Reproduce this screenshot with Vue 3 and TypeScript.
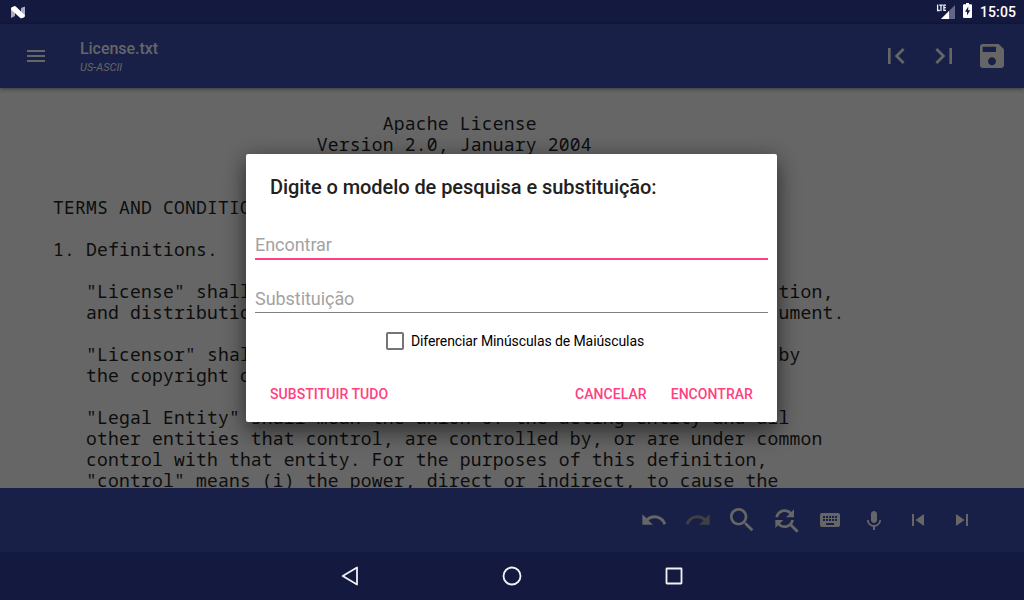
<script setup lang="ts">
import { ref } from 'vue'

const find = ref('')
const replacement = ref('')
const matchCase = ref(false)

const licenseText = [
  '                                 Apache License',
  '                           Version 2.0, January 2004',
  '                        http://www.apache.org/licenses/',
  '',
  '   TERMS AND CONDITIONS FOR USE, REPRODUCTION, AND DISTRIBUTION',
  '',
  '   1. Definitions.',
  '',
  '      "License" shall mean the terms and conditions for use, reproduction,',
  '      and distribution as defined by Sections 1 through 9 of this document.',
  '',
  '      "Licensor" shall mean the copyright owner or entity authorized by',
  '      the copyright owner that is granting the License.',
  '',
  '      "Legal Entity" shall mean the union of the acting entity and all',
  '      other entities that control, are controlled by, or are under common',
  '      control with that entity. For the purposes of this definition,',
  '      "control" means (i) the power, direct or indirect, to cause the',
].join('\n')

interface Tool { name: string; path: string; size: number; off?: boolean }

const tools: Tool[] = [
  { name: 'Undo', size: 28, path: 'M12.5 8c-2.65 0-5.05.99-6.9 2.6L2 7v9h9l-3.62-3.62c1.39-1.16 3.16-1.88 5.12-1.88 3.54 0 6.55 2.31 7.6 5.5l2.37-.78C21.08 11.03 17.15 8 12.5 8z' },
  { name: 'Redo', size: 28, off: true, path: 'M18.4 10.6C16.55 8.99 14.15 8 11.5 8c-4.65 0-8.58 3.03-9.96 7.22L3.9 16c1.05-3.19 4.05-5.5 7.6-5.5 1.95 0 3.73.72 5.12 1.88L13 16h9V7l-3.6 3.6z' },
  { name: 'Find', size: 32, path: 'M15.5 14h-.79l-.28-.27C15.41 12.59 16 11.11 16 9.5 16 5.91 13.09 3 9.5 3S3 5.91 3 9.5 5.91 16 9.5 16c1.61 0 3.09-.59 4.23-1.57l.27.28v.79l5 4.99L20.49 19l-4.99-5zm-6 0C7.01 14 5 11.99 5 9.5S7.01 5 9.5 5 14 7.01 14 9.5 11.99 14 9.5 14z' },
  { name: 'Replace', size: 32, path: 'M11 6c1.38 0 2.63.56 3.54 1.46L12 10h6V4l-2.05 2.05C14.68 4.78 12.93 4 11 4c-3.53 0-6.43 2.61-6.92 6H6.1c.46-2.28 2.48-4 4.9-4zm5.64 9.14c.66-.9 1.12-1.97 1.28-3.14H15.9c-.46 2.28-2.48 4-4.9 4-1.38 0-2.63-.56-3.54-1.46L10 12H4v6l2.05-2.05C7.32 17.22 9.07 18 11 18c1.55 0 2.98-.51 4.14-1.36L20 21.49 21.49 20l-4.85-4.86z' },
  { name: 'Keyboard', size: 24, path: 'M20 5H4c-1.1 0-1.99.9-1.99 2L2 17c0 1.1.9 2 2 2h16c1.1 0 2-.9 2-2V7c0-1.1-.9-2-2-2zm-9 3h2v2h-2V8zm0 3h2v2h-2v-2zM8 8h2v2H8V8zm0 3h2v2H8v-2zm-1 2H5v-2h2v2zm0-3H5V8h2v2zm9 7H8v-2h8v2zm0-4h-2v-2h2v2zm0-3h-2V8h2v2zm3 3h-2v-2h2v2zm0-3h-2V8h2v2z' },
  { name: 'Voice', size: 24, path: 'M12 15c1.66 0 2.99-1.34 2.99-3L15 6c0-1.66-1.34-3-3-3S9 4.34 9 6v6c0 1.66 1.34 3 3 3zm5.3-3c0 3-2.54 5.1-5.3 5.1S6.7 15 6.7 12H5c0 3.42 2.72 6.23 6 6.72V22h2v-3.28c3.28-.48 6-3.3 6-6.72h-1.7z' },
  { name: 'Previous', size: 24, path: 'M6 6h2v12H6zm3.5 6l8.5 6V6z' },
  { name: 'Next', size: 24, path: 'M6 18l8.5-6L6 6v12zM16 6v12h2V6h-2z' },
]
</script>

<template>
  <div class="screen">
    <header class="status">
      <svg class="nougat" width="14" height="13" viewBox="0 0 14 13">
        <path d="M0 2l4-1.5V10l-4 2zM10 2l4-1.5V10l-4 2z" fill="#a9abbd" />
        <path d="M.2 2.600Q.2 1.300 1.300.9L3.200.2q.9-.3 1.600.4L13.800 9v1.300q-.1 1-1 1.300l-2 .7q-.8.2-1.500-.4L.2 3.700z" fill="#fff" />
      </svg>
      <div class="indicators">
        <svg width="19" height="16" viewBox="0 0 19 16">
          <path d="M19 1v14H5z" fill="#62668a" />
          <path d="M13 7v8H5z" fill="#fff" />
          <path d="M0 0h11v8H0z" fill="#141940" />
          <path d="M1.600.5v6h2.200M3.200 1.100h3.600M5 1.100v5.900M10 1.100H7.900v5.300H10M7.900 3.700h2" fill="none" stroke="#f0f0f5" stroke-width="1.300" />
        </svg>
        <svg class="battery" width="9" height="15" viewBox="0 0 9 15">
          <path d="M3 0h3v1.300h2q1 0 1 1V14q0 1-1 1H1q-1 0-1-1V2.300q0-1 1-1h2z" fill="#fff" />
          <path d="M5.300 3.500L2 8.800h2v3.700l3.200-5.300H5.200z" fill="#141940" />
        </svg>
        <span class="clock">15:05</span>
      </div>
    </header>

    <div class="appbar">
      <svg class="menu" width="24" height="24" viewBox="0 0 24 24"><path d="M3 18h18v-2H3v2zm0-5h18v-2H3v2zm0-7v2h18V6H3z" /></svg>
      <div class="titles">
        <div class="file">License.txt</div>
        <div class="encoding">US-ASCII</div>
      </div>
      <div class="actions">
        <svg width="32" height="32" viewBox="0 0 24 24"><path d="M18.410 16.590L13.820 12l4.590-4.590L17 6l-6 6 6 6zM6 6h2v12H6z" /></svg>
        <svg width="32" height="32" viewBox="0 0 24 24"><path d="M5.590 7.410L10.180 12l-4.590 4.590L7 18l6-6-6-6zM16 6h2v12h-2z" /></svg>
        <svg width="32" height="32" viewBox="0 0 24 24"><path d="M17 3H5c-1.110 0-2 .9-2 2v14c0 1.100.89 2 2 2h14c1.100 0 2-.9 2-2V7l-4-4zm-5 16c-1.660 0-3-1.340-3-3s1.340-3 3-3 3 1.340 3 3-1.340 3-3 3zm3-10H5V5h10v4z" /></svg>
      </div>
    </div>

    <main class="editor"><pre>{{ licenseText }}</pre></main>

    <div class="toolbar">
      <span v-for="tool in tools" :key="tool.name" class="tool" :class="{ off: tool.off }">
        <svg :width="tool.size" :height="tool.size" viewBox="0 0 24 24"><path :d="tool.path" /></svg>
      </span>
    </div>

    <nav class="nav">
      <svg width="24" height="24" viewBox="0 0 24 24"><path d="M19 3.500v17L4.700 12z" /></svg>
      <svg width="24" height="24" viewBox="0 0 24 24"><circle cx="12" cy="12" r="8.500" /></svg>
      <svg width="24" height="24" viewBox="0 0 24 24"><rect x="4.500" y="4.500" width="15" height="15" rx=".5" /></svg>
    </nav>

    <section class="dialog" role="dialog">
      <h1>Digite o modelo de pesquisa e substituição:</h1>
      <input v-model="find" class="field active" placeholder="Encontrar" />
      <input v-model="replacement" class="field second" placeholder="Substituição" />
      <label class="check">
        <input v-model="matchCase" type="checkbox" />
        <span>Diferenciar Minúsculas de Maiúsculas</span>
      </label>
      <div class="buttons">
        <button class="all">Substituir tudo</button>
        <button>Cancelar</button>
        <button>Encontrar</button>
      </div>
    </section>
  </div>
</template>

<style>
body { margin: 0; overflow: hidden; }
</style>

<style scoped>
* { box-sizing: border-box; }
svg { display: block; flex: none; }
.screen { position: relative; width: 1024px; height: 600px; display: flex; flex-direction: column; overflow: hidden; background: #666; font-family: Roboto, sans-serif; }
.status { height: 24px; flex: none; display: flex; justify-content: space-between; background: #141940; padding: 0 8px 0 11px; }
.nougat { margin-top: 6px; }
.indicators { display: flex; color: #fff; }
.indicators > svg:first-child { margin-top: 4px; }
.battery { margin: 3px 8px 0 8px; }
.clock { font-size: 14px; font-weight: 500; line-height: 25px; letter-spacing: .1px; width: 36px; }
.appbar { height: 64px; flex: none; display: flex; align-items: center; background: #192048; color: #666; padding: 0 16px 0 24px; position: relative; box-shadow: 0 1px 4px rgba(0, 0, 0, .45); }
.appbar svg { fill: #666; }
.titles { margin-left: 32px; flex: 1; padding-top: 2px; }
.file { font-size: 16px; font-weight: 500; line-height: 20px; letter-spacing: -.05px; }
.encoding { font-size: 11px; font-style: italic; line-height: 14px; margin-top: 2px; }
.actions { display: flex; gap: 16px; }
.editor { height: 400px; flex: none; overflow: hidden; padding: 25px 0 0 20px; }
pre { margin: 0; font-family: "Droid Sans Mono", "Noto Sans Mono", "DejaVu Sans Mono", monospace; font-size: 18px; line-height: 21px; letter-spacing: .194px; color: #0d0d0d; }
.toolbar { height: 64px; flex: none; display: flex; justify-content: flex-end; background: #192048; padding-right: 40px; }
.tool { width: 44px; display: flex; align-items: center; justify-content: center; }
.tool svg { fill: #666; }
.tool:nth-child(-n+4) svg { margin-right: 1px; }
.tool.off svg { fill: #404040; }
.nav { height: 48px; flex: none; display: flex; align-items: center; justify-content: center; gap: 138px; background: #141940; }
.nav svg { fill: none; stroke: #f2f2f5; stroke-width: 1.8; stroke-linejoin: round; }
.dialog { position: absolute; left: 246px; top: 154px; width: 531px; height: 268px; background: #fff; border-radius: 2px; box-shadow: 0 12px 22px rgba(0, 0, 0, .38), 0 2px 20px rgba(0, 0, 0, .28); display: flex; flex-direction: column; padding: 0 9px; }
h1 { margin: 20px 15px 0; font-size: 20px; font-weight: 500; line-height: 27px; letter-spacing: -.065px; color: #212121; white-space: nowrap; }
.field { width: 100%; height: 32px; margin: 27px 0 0; padding: 3px 0 0; border: 0; border-bottom: 1px solid #808080; border-radius: 0; outline: 0; background: none; font-family: Roboto, sans-serif; font-size: 18px; letter-spacing: -.05px; color: #000; }
.field.active { border-bottom: 2px solid #ff4081; padding: 2px 0 0; }
.field.second { margin-top: 21px; }
.field::placeholder { color: #a3a3a3; opacity: 1; }
.check { display: flex; align-items: center; align-self: center; gap: 7px; margin: 18px 0 0 7px; height: 20px; font-size: 14px; letter-spacing: -.09px; color: #000; white-space: nowrap; }
.check input { appearance: none; width: 18px; height: 18px; margin: 0; border: 2px solid #757575; border-radius: 2px; }
.buttons { display: flex; gap: 24px; margin: 33px 15px 0; }
button { border: 0; padding: 0; background: none; font: 500 14px/20px Roboto, sans-serif; letter-spacing: .06px; color: #ff4081; text-transform: uppercase; }
.all { margin-right: auto; }
</style>
